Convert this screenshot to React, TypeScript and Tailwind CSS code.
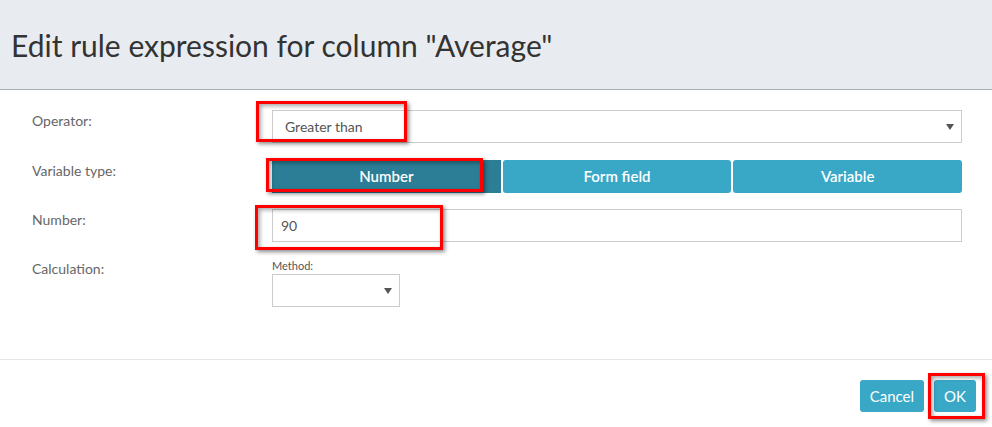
import React from 'react';

const Caret = () => (
  <svg width="8" height="6" viewBox="0 0 8 6" className="shrink-0">
    <path d="M0 0h8L4 6z" fill="#555" />
  </svg>
);

const Highlight = ({ className }: { className: string }) => (
  <div
    className={`absolute pointer-events-none border-[3px] border-[#ff0000] shadow-[2px_2px_4px_rgba(0,0,0,0.45),inset_2px_2px_4px_rgba(0,0,0,0.35)] ${className}`}
  />
);

const Row = ({ label, className, children }: { label: string; className?: string; children: React.ReactNode }) => (
  <div className={`flex ${className ?? ''}`}>
    <div className="w-[240px] shrink-0 pt-[3px] text-[14px] leading-[16px] text-[#666]">{label}</div>
    <div className="w-[690px]">{children}</div>
  </div>
);

export default function App() {
  const types = ['Number', 'Form field', 'Variable'];

  return (
    <div
      className="relative w-[992px] h-[427px] overflow-hidden bg-white"
      style={{ fontFamily: 'Lato, "Open Sans", sans-serif' }}
    >
      {/* Header */}
      <div className="h-[90px] bg-[#e8ecf0] border-b border-[#a9aeb3] flex items-center px-[11px]">
        <h1 className="text-[30px] leading-none text-[#333] font-normal">
          Edit rule expression for column "Average"
        </h1>
      </div>

      {/* Body */}
      <div className="h-[269px] pl-[32px] pt-[20px]">
        <Row label="Operator:">
          <div className="h-[33px] border border-[#ccc] flex items-center justify-between pl-[12px] pr-[7px] text-[14px] text-[#555]">
            <span>Greater than</span>
            <Caret />
          </div>
        </Row>

        <Row label="Variable type:" className="mt-[17px]">
          <div className="grid grid-cols-3 gap-[2px] h-[33px]">
            {types.map((t, i) => (
              <div
                key={t}
                className={`flex items-center justify-center text-[15px] text-white font-semibold ${
                  i === 0 ? 'bg-[#2b7e95]' : 'bg-[#39a8c6] rounded-[3px]'
                }`}
              >
                {t}
              </div>
            ))}
          </div>
        </Row>

        <Row label="Number:" className="mt-[16px]">
          <div className="h-[33px] border border-[#ccc] flex items-center pl-[8px] text-[14px] text-[#555]">
            90
          </div>
        </Row>

        <Row label="Calculation:" className="mt-[16px]">
          <div className="text-[11px] leading-[16px] text-[#555]">Method:</div>
          <div className="w-[128px] h-[33px] border border-[#ccc] flex items-center justify-end pr-[7px]">
            <Caret />
          </div>
        </Row>
      </div>

      {/* Footer */}
      <div className="border-t border-[#e5e5e5] flex justify-end gap-[10px] pt-[20px] pr-[16px]">
        <button className="h-[32px] px-[10px] rounded-[3px] bg-[#39a8c6] text-white text-[15px]">Cancel</button>
        <button className="h-[32px] px-[10px] rounded-[3px] bg-[#39a8c6] text-white text-[15px]">OK</button>
      </div>

      {/* Annotation boxes */}
      <Highlight className="left-[256px] top-[101px] w-[151px] h-[41px]" />
      <Highlight className="left-[266px] top-[158px] w-[217px] h-[34px]" />
      <Highlight className="left-[255px] top-[205px] w-[188px] h-[45px]" />
      <Highlight className="left-[928px] top-[373px] w-[57px] h-[46px]" />
    </div>
  );
}
